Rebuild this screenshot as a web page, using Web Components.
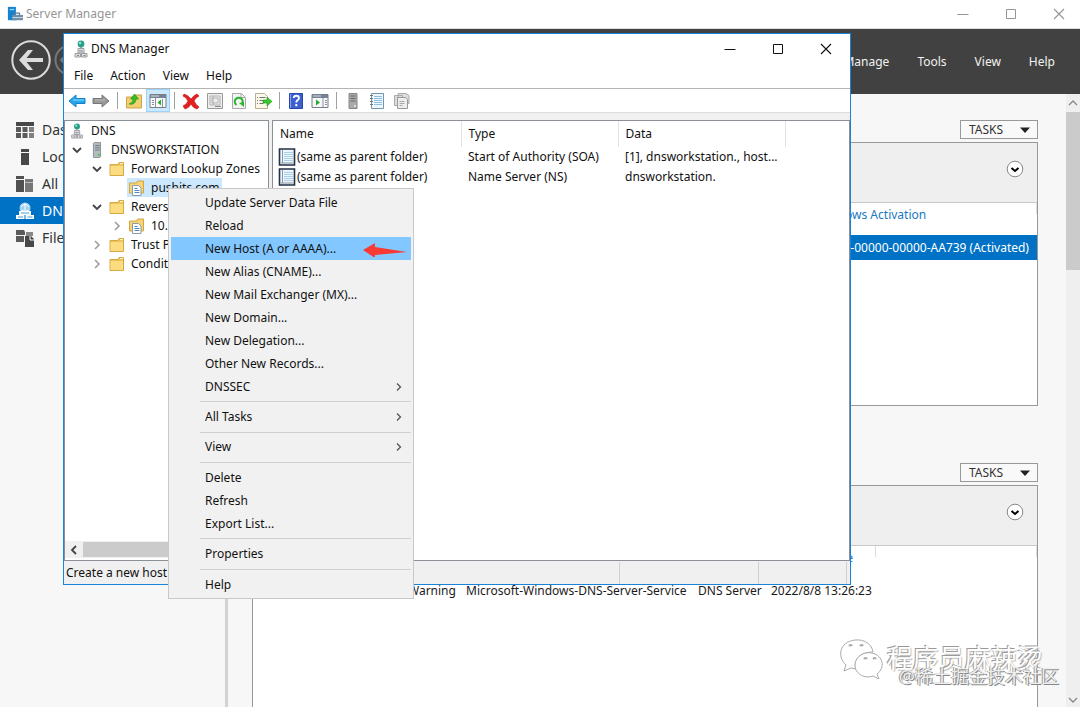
<!DOCTYPE html>
<html lang="en">
<head>
<meta charset="utf-8">
<title>Server Manager</title>
<style>
  html, body { margin: 0; height: 100%; overflow: hidden; }
  body { font: 12px/16px "Noto Sans", "Noto Sans CJK SC", sans-serif; color: #1a1a1a; background: #f7f7f7; }
</style>
</head>
<body>
<server-desktop></server-desktop>

<script>
const icons = {
  server: ['0 0 18 18', '<path d="M1 1h9v15H1z" fill="#1583cf"/><path d="M3 4h5" stroke="#8fd0f7" stroke-width="1.5"/><path d="M6 10h12v6H6z" fill="#6d8fa8"/><path d="M9 10V8h5v2" fill="none" stroke="#5d7f98" stroke-width="1.4"/><path d="M6 13h12" stroke="#d5e2ea"/>'],
  back: ['0 0 40 40', '<circle cx="20" cy="20" r="18.7" fill="none" stroke="#dcdcdc" stroke-width="2"/><path d="M32 20H11" fill="none" stroke="#dcdcdc" stroke-width="4"/><path d="M17 10h5l-8 10 8 10h-5L8 20z" fill="#dcdcdc"/>'],
  fwd: ['0 0 32 32', '<circle cx="16" cy="16" r="14.5" fill="none" stroke="#777" stroke-width="2"/><path d="M25 16H8" fill="none" stroke="#777" stroke-width="3"/><path d="M14 9 7 16l7 7" fill="none" stroke="#777" stroke-width="2"/>'],
  min: ['0 0 12 12', '<path d="M.5 6.5h11" stroke="currentColor"/>'],
  max: ['0 0 12 12', '<path d="M1.5 1.5h9v9h-9z" fill="none" stroke="currentColor"/>'],
  close: ['0 0 12 12', '<path d="m1 1 10 10M11 1 1 11" stroke="currentColor" stroke-width="1.1"/>'],
  dash: ['0 0 18 16', '<path d="M0 0h18v4H0z" fill="#484848"/><path d="M0 5h5v5H0zM0 11h5v5H0zM6.500 5h5v5h-5zM6.500 11h5v5h-5z" fill="#5a5a5a"/><path d="M13 5h5v5h-5zM13 11h5v5h-5z" fill="#808080"/>'],
  local: ['0 0 18 16', '<path d="M5 0h8v3H5zM5 4h8v12H5z" fill="#484848"/>'],
  all: ['0 0 18 16', '<path d="M0 0h8v16H0z" fill="#505050"/><path d="M0 3.500h8" stroke="#f7f7f7"/><path d="M9 3h8v13H9z" fill="#777"/><path d="M9 6.500h8" stroke="#d5d5d5" stroke-width=".7"/>'],
  dnsnav: ['0 0 18 18', '<circle cx="9" cy="6" r="5.500" fill="#9fd1f2"/><path d="M5 5q4-5 8 0M5 8q4 3 8 0M9 1v10" stroke="#fff" fill="none"/><path d="M3 9h12v4H3zM0 13h8.500v4H0zM9.500 13H18v4H9.500z" fill="#fff"/><path d="M5 11h8M2 15h5M11.500 15h5" stroke="#4b9fd8"/>'],
  file: ['0 0 18 18', '<path d="M0 1h8l1 2v3H0zM0 7h8v6H0z" fill="#5a5a5a"/><path d="M10 3h7v4h-7z" fill="#888"/><path d="M9 7h6l3 3v8H9z" fill="#484848"/><path d="M14 7v4h4" stroke="#f7f7f7" fill="none"/>'],
  dns: ['0 0 14 18', '<circle cx="7" cy="4" r="3.400" fill="#2d9f88"/><circle cx="6" cy="3" r="1.300" fill="#8be5cd"/><path d="M7 7v3" stroke="#777"/><path d="M4 8.500h6V13H4zM1 13.500h5.500v3.500H1zM7.500 13.500H13v3.500H7.500z" fill="#ddd" stroke="#9a9ea2"/><path d="M5 11h4M3 15.500h2M9.500 15.500h2" stroke="#888"/>'],
  host: ['0 0 12 18', '<path d="M2 1.500 3 .5h7v16l-1 1H2z" fill="#b5bcc1" stroke="#848c91"/><path d="M4 4h5M4 6.500h5M4 9h5" stroke="#697177"/><circle cx="8" cy="14.500" r="1.300" fill="#51c65b"/>'],
  hostgray: ['0 0 12 18', '<path d="M2 1.500h8v15H2z" fill="#aaa" stroke="#888"/><path d="M3.500 4h5M3.500 6.500h5M3.500 9h5" stroke="#666"/><circle cx="8" cy="14" r="1" fill="#eee"/>'],
  folder: ['0 0 16 16', '<path d="M1 3.500h8l1-2h4.500v13H1z" fill="#e9c35b" stroke="#d6a842"/><path d="M1.500 5H14v9H1.500z" fill="#fbdc81"/><path d="M11 2.500h3" stroke="#fff5c8"/>'],
  zone: ['0 0 16 16', '<path d="M.5 3h7l1-2h6v12H.5z" fill="#f6d376" stroke="#d3a644"/><path d="M3.500 5.500h6l2.500 2.500v7.500H3.500z" fill="#fff" stroke="#8d9ba5"/><path d="M5.500 8.500h3M5.500 10.500h5M5.500 12.500h5" stroke="#4e88bd"/>'],
  down: ['0 0 12 12', '<path d="m2 4 4 4 4-4" fill="none" stroke="#444" stroke-width="1.8"/>'],
  right: ['0 0 12 12', '<path d="m4 2 4 4-4 4" fill="none" stroke="#999" stroke-width="1.500"/>'],
  sub: ['0 0 12 12', '<path d="m4 2.500 3.500 3.500-3.500 3.500" fill="none" stroke="#555" stroke-width="1.300"/>'],
  left: ['0 0 12 12', '<path d="M8 2 4 6l4 4" fill="none" stroke="#444" stroke-width="1.800"/>'],
  up: ['0 0 12 12', '<path d="m2 8 4-4 4 4" fill="none" stroke="#888" stroke-width="1.300"/>'],
  downgray: ['0 0 12 12', '<path d="m2 4 4 4 4-4" fill="none" stroke="#888" stroke-width="1.300"/>'],
  tleft: ['0 0 18 18', '<path d="m1 9 7-6v3.500h9v5H8V15z" fill="#25a6ea" stroke="#1780c7"/><path d="M5 8h11" stroke="#8edbff"/>'],
  tright: ['0 0 18 18', '<path d="m17 9-7-6v3.500H1v5h9V15z" fill="#999" stroke="#777"/><path d="M3 8h10" stroke="#bbb"/>'],
  upfolder: ['0 0 18 18', '<path d="M1.500 5h7l1-2h7v13h-15z" fill="#f2cf70" stroke="#cda348"/><path d="M4 12c3-1 4-3 4-5H5.500L9.500 2l4 5H11c0 4-3 6-7 5z" fill="#35bd24" stroke="#259015" stroke-width=".6"/>'],
  tree: ['0 0 18 18', '<path d="M1 2.500h16v13H1z" fill="#f8f8f8" stroke="#777e89"/><path d="M1 3h16v3H1z" fill="#778395"/><path d="M2 4h8" stroke="#d5dbe4"/><path d="M6.500 6v9M3 8.500h2M3 10.500h2M3 12.500h2M13.500 7v8" stroke="#8793a2"/><path d="M12 7.500v6L8.500 10.500z" fill="#23ad2d"/>'],
  run: ['0 0 18 18', '<path d="M1 2.500h16v13H1z" fill="#f8f8f8" stroke="#777e89"/><path d="M1 3h16v3H1z" fill="#778395"/><path d="M2 4h8" stroke="#d5dbe4"/><path d="M12 6v9M14 8.500h2M14 10.500h2M14 12.500h2" stroke="#8793a2"/><path d="M5 7.500v6l4-3z" fill="#23ad2d"/>'],
  x: ['0 0 18 18', '<path d="M2 2q4 1 7 5 3-4 6-5l2 2q-4 2-5 5 2 4 5 6l-2 2q-4-1-6-5-2 4-6 5l-2-3q4-2 5-5-2-4-5-5z" fill="#e62020" stroke="#b81515" stroke-width=".6"/>'],
  props: ['0 0 18 18', '<path d="M1.500 1.500h15v15h-15z" fill="#eee" stroke="#999"/><path d="M4 4h10v9H4zM6 6h6v5H6zM7 4v9" fill="none" stroke="#b0b0b0"/><path d="M9 14.500h6" stroke="#888"/>'],
  refresh: ['0 0 18 18', '<path d="M2.500 1.500h9l4 4v11h-13z" fill="#f5f5f5" stroke="#aaa"/><path d="M11 1.500v4h4" fill="none" stroke="#aaa"/><path d="M6.500 13A4 4 0 1 1 12 12" fill="none" stroke="#28b52b" stroke-width="2"/><path d="m9 11 5-1v5z" fill="#28b52b"/>'],
  export: ['0 0 18 18', '<path d="M1.500 1.500h9l3 3v12h-12z" fill="#faf8e8" stroke="#b7b090"/><path d="M3 5.500h1M3 8.500h1M3 11.500h1M5.500 5.500h6M5.500 8.500h4M5.500 11.500h4" stroke="#777"/><path d="M9 8h4V5l5 4.500-5 4.500v-3H9z" fill="#3ac72d" stroke="#249719" stroke-width=".6"/>'],
  help: ['0 0 18 18', '<path d="M2.500 1.500h13v15h-13z" fill="#3d5fd0" stroke="#2546a4"/><path d="M3.500 2v14" stroke="#8da4ec"/><path d="M6.700 6q.3-2.300 2.700-2.300 2.500 0 2.500 2.300 0 1.400-1.400 2.200-1.200.8-1.200 2.300M9.300 12v2.300" fill="none" stroke="#fff" stroke-width="1.900"/>'],
  notebook: ['0 0 18 18', '<path d="M3.500 1.500h12v15h-12z" fill="#edf7fd" stroke="#7795aa"/><path d="M6 4.500h8M6 6.500h8M6 8.500h8M6 10.500h8M6 12.500h8" stroke="#8cbfe0"/><path d="M2 3.500h3M2 6.500h3M2 9.500h3M2 12.500h3" stroke="#777"/>'],
  record: ['0 0 18 18', '<path d="M1.500 1h15v16h-15z" fill="#edf6fc" stroke="#233047" stroke-width="1.600"/><path d="M6 4.500h9M6 6.500h9M6 8.500h9M6 10.500h9M6 12.500h9" stroke="#a9d0e8"/><path d="M4.500 2v13" stroke="#8797a8"/><path d="M3 15h12" stroke="#8a94a0"/>'],
  copy: ['0 0 18 18', '<path d="M2.500 3.500h8v10h-8zM6 1.500h8l3 2v8H6z" fill="#ddd" stroke="#aaa"/><path d="M5.500 5.500h8l2 2v9h-10z" fill="#eee" stroke="#999"/><path d="M7.500 9.500h5M7.500 11.500h5M7.500 13.500h3" stroke="#aaa"/>'],
  tri: ['0 0 12 12', '<path d="M1 3.500h10L6 9z" fill="#222"/>'],
  expand: ['0 0 18 18', '<circle cx="9" cy="9" r="7.800" fill="#fff" stroke="#888"/><path d="m5.500 8 3.500 3 3.500-3" fill="none" stroke="#000" stroke-width="2"/>'],
  arrow: ['0 0 44 16', '<path d="M0 9 12 2v4l32 5-32 3v3z" fill="#f83a35"/>'],
  wechat: ['0 0 44 42', '<g fill="#fff" fill-opacity=".8" stroke="#aaa"><path d="M7 28C-2 20 0 5 16 3c9-1 17 4 18 12-13 0-20 8-17 17l-5-1-7 3z"/><path d="M38 37c8-6 7-18-5-21-12-2-20 8-16 17 4 7 11 8 17 6l6 3z"/><path d="M10 9q2-2 3 0M21 9q2-2 3 0M25 22q2-2 3 0M34 22q2-2 3 0" stroke-width="2"/></g>'],
};

/* Base class: an open shadow root with the subclass's styles and markup. */
class View extends HTMLElement {
  constructor() { super(); this.attachShadow({ mode: 'open' }); }
  connectedCallback() {
    const t = document.createElement('template');
    t.innerHTML = `<style>*{box-sizing:border-box}button{font:inherit;color:inherit;border:0;padding:0;margin:0;background:none}${this.css()}</style>${this.html()}`;
    this.shadowRoot.replaceChildren(t.content.cloneNode(true));
  }
  css() { return ''; }
  html() { return '<slot></slot>'; }
}

class UiIcon extends View {
  css() {
    return `:host{display:inline-flex;flex:none}svg{display:block;width:${this.getAttribute('w') || 16}px;height:${this.getAttribute('h') || this.getAttribute('w') || 16}px}`;
  }
  html() {
    const [box, body] = icons[this.getAttribute('name')];
    return `<svg viewBox="${box}" preserveAspectRatio="xMidYMid meet" aria-hidden="true">${body}</svg>`;
  }
}

class TitleBar extends View {
  css() {
    return `:host{display:flex;align-items:center;background:#fff}
      .title{flex:1;display:flex;align-items:center;gap:3px;font-size:12px}
      button{width:48px;height:28px;display:flex;align-items:center;justify-content:center}`;
  }
  html() {
    return `<div class="title"><slot name="icon"></slot><slot></slot></div>
      <button aria-label="Minimize"><ui-icon name="min" w="12"></ui-icon></button>
      <button aria-label="Maximize"><ui-icon name="max" w="12"></ui-icon></button>
      <button aria-label="Close"><ui-icon name="close" w="12"></ui-icon></button>`;
  }
}

class AppHeader extends View {
  css() {
    return `:host{display:flex;align-items:center;height:65px;box-sizing:border-box;background:#414141;color:#f2f2f2;padding:1px 25px 0 11px}
      .nav{display:flex;align-items:center;gap:3px;flex:1}
      .menu{display:flex;gap:28px}`;
  }
  html() {
    return `<div class="nav"><button aria-label="Back"><ui-icon name="back" w="40"></ui-icon></button>
      <button aria-label="Forward"><ui-icon name="fwd" w="32"></ui-icon></button></div>
      <div class="menu"><button>Manage</button><button>Tools</button><button>View</button><button>Help</button></div>`;
  }
}

class NavItem extends View {
  css() {
    return `:host{display:block}
      a{display:flex;align-items:center;gap:8px;height:27px;padding-left:16px;font-size:14px;line-height:20px;color:#333;text-decoration:none;white-space:nowrap}
      :host([selected]) a{background:#0072c6;color:#fff}`;
  }
  html() { return `<a href="#"><ui-icon name="${this.getAttribute('icon')}" w="18"></ui-icon><slot></slot></a>`; }
}

class SideNav extends View {
  css() { return `:host{display:block;box-sizing:border-box;width:228px;flex:none;padding-top:22px;border-right:3px solid #d2d2d2;background:#f7f7f7}`; }
  html() {
    return `<nav><nav-item icon="dash">Das</nav-item><nav-item icon="local">Loc</nav-item>
      <nav-item icon="all">All</nav-item><nav-item icon="dnsnav" selected>DN</nav-item>
      <nav-item icon="file">File</nav-item></nav>`;
  }
}

/* A dashboard tile: TASKS button above a bordered panel with a filter band. */
class TilePanel extends View {
  css() {
    return `:host{display:flex;flex-direction:column;align-items:stretch}
      .tasks{align-self:flex-end;display:flex;align-items:center;justify-content:space-between;width:78px;height:19px;padding:0 6px 0 8px;border:1px solid #999;background:#f9f9f9;color:#333;margin-bottom:3px}
      .panel{flex:1;border:1px solid #999;background:#fff}
      .band{display:flex;align-items:center;justify-content:flex-end;height:60px;padding:0 13px 4px 0;background:#efefef;border-bottom:1px solid #c8c8c8}`;
  }
  html() {
    return `<button class="tasks">TASKS<ui-icon name="tri" w="12"></ui-icon></button>
      <div class="panel"><div class="band"><button aria-label="Expand filters"><ui-icon name="expand" w="18"></ui-icon></button></div><slot></slot></div>`;
  }
}

const gridCss = `:host{display:block}
  table{width:100%;table-layout:fixed;border-collapse:collapse}
  th,td{text-align:left;font-weight:400;line-height:24px;padding:0 5px;white-space:nowrap}
  th{color:#1a79bf;padding-bottom:8px;background:linear-gradient(#ddd,#ddd) right top/1px 11px no-repeat}
  td{line-height:25px}`;

class ServerGrid extends View {
  css() { return gridCss + `.act{width:226px}tbody tr{background:#0072c6;color:#fff}`; }
  html() {
    return `<table><thead><tr><th></th><th class="act">Windows Activation</th></tr></thead>
      <tbody><tr><td></td><td>00430-00000-00000-AA739 (Activated)</td></tr></tbody></table>`;
  }
}

class EventGrid extends View {
  css() { return gridCss + `.a{width:150px}.c{width:58px}.d{width:232px}.e{width:73px}.f{width:110px}`; }
  html() {
    return `<table><thead><tr><th class="a"></th><th class="c"></th><th class="d"></th><th class="e"></th><th class="f">Date and Time</th><th></th></tr></thead>
      <tbody><tr><td></td><td>Warning</td><td>Microsoft-Windows-DNS-Server-Service</td><td>DNS Server</td><td>2022/8/8 13:26:23</td><td></td></tr></tbody></table>`;
  }
}

class PageScroll extends View {
  css() {
    return `:host{display:flex;flex-direction:column;align-items:center;width:14px;flex:none;background:#efefef;padding:3px 0 1px;box-sizing:border-box}
      .track{flex:1;width:100%}.thumb{height:27%;background:#cbcbcb;margin-top:3px}`;
  }
  html() {
    return `<ui-icon name="up" w="12"></ui-icon><div class="track"><div class="thumb"></div></div><ui-icon name="downgray" w="12"></ui-icon>`;
  }
}

class ServerManager extends View {
  css() {
    return `:host{display:flex;flex-direction:column;height:100%}
      title-bar{height:29px;padding-left:7px;margin-right:-3px;color:#959595;border-bottom:1px solid #ddd}
      .body{flex:1;display:flex;min-height:0}
      main{flex:1;min-width:0;display:flex;flex-direction:column;gap:57px;padding:26px 28px 0 24px;overflow:hidden}
      .props{height:286px;flex:none}
      .events{flex:none;height:400px}`;
  }
  html() {
    return `<title-bar><ui-icon slot="icon" name="server" w="16"></ui-icon>Server Manager</title-bar>
      <app-header></app-header>
      <div class="body"><side-nav></side-nav>
      <main><tile-panel class="props"><server-grid></server-grid></tile-panel>
      <tile-panel class="events"><event-grid></event-grid></tile-panel></main>
      <page-scroll></page-scroll></div>`;
  }
}

class ToolBar extends View {
  css() {
    return `:host{display:flex;align-items:stretch;height:25px;box-sizing:border-box;padding-left:1px;border-top:1px solid #b4b4b4;border-bottom:1px solid #dcdcdc;background:#fff}
      button{width:24px;display:flex;align-items:center;justify-content:center}
      button.on{background:#cce8ff;box-shadow:inset 0 0 0 1px #99d1ff}
      i{width:1px;margin:3px 4px;background:#a0a0a0}`;
  }
  html() {
    const b = (n, l, c = '') => `<button class="${c}" aria-label="${l}"><ui-icon name="${n}" w="18"></ui-icon></button>`;
    return b('tleft', 'Back') + b('tright', 'Forward') + '<i></i>' + b('upfolder', 'Up') + b('tree', 'Show tree', 'on') + '<i></i>' +
      b('x', 'Delete') + b('props', 'Properties') + b('refresh', 'Refresh') + b('export', 'Export') + '<i></i>' +
      b('help', 'Help') + b('run', 'Action pane') + '<i></i>' + b('hostgray', 'New server') + b('notebook', 'New record') + b('copy', 'Copy');
  }
}

class TreeRow extends View {
  css() {
    const level = Number(this.getAttribute('level'));
    return `:host{display:flex;align-items:center;height:19px;padding-left:${2 + Math.max(0, level - 1) * 20}px;white-space:nowrap}
      .slot{width:20px;display:flex;justify-content:center;flex:none}
      .label{display:flex;align-items:center;gap:4px;height:19px;padding-right:2px}
      :host([selected]) .label{background:#cce8ff}`;
  }
  html() {
    const open = this.getAttribute('open');
    const chev = this.getAttribute('level') === '0' ? '' : `<span class="slot">${open ? `<ui-icon name="${open}" w="12"></ui-icon>` : ''}</span>`;
    return `${chev}<span class="label"><span class="slot"><ui-icon name="${this.getAttribute('icon')}" w="16"></ui-icon></span><slot></slot></span>`;
  }
}

class ZoneTree extends View {
  css() {
    return `:host{display:flex;flex-direction:column;box-sizing:border-box;width:205px;flex:none;border:1px solid #8b8f96;background:#fff;overflow:hidden}
      .rows{flex:1}
      .bar{display:flex;align-items:center;height:17px;margin-bottom:2px;background:#f0f0f0}
      .bar button{width:18px;height:17px;display:flex;align-items:center;justify-content:center}
      .thumb{width:130px;height:15px;background:#cbcbcb}`;
  }
  html() {
    return `<div class="rows"><tree-row level="0" icon="dns">DNS</tree-row>
      <tree-row level="1" open="down" icon="host">DNSWORKSTATION</tree-row>
      <tree-row level="2" open="down" icon="folder">Forward Lookup Zones</tree-row>
      <tree-row level="3" icon="zone" selected>pushits.com</tree-row>
      <tree-row level="2" open="down" icon="folder">Reverse</tree-row>
      <tree-row level="3" open="right" icon="zone">10.1</tree-row>
      <tree-row level="2" open="right" icon="folder">Trust P</tree-row>
      <tree-row level="2" open="right" icon="folder">Condit</tree-row></div>
      <div class="bar"><button aria-label="Scroll left"><ui-icon name="left" w="12"></ui-icon></button><div class="thumb"></div></div>`;
  }
}

class RecordList extends View {
  css() {
    return `:host{display:block;box-sizing:border-box;flex:1;min-width:0;border:1px solid #8b8f96;background:#fff}
      table{width:100%;table-layout:fixed;border-collapse:collapse}
      th,td{text-align:left;font-weight:400;padding:0 7px;white-space:nowrap;height:20px}
      th{height:26px;border-right:1px solid #e2e2e2}
      th:last-child{border-right:0}
      td:first-child{padding-left:5px}
      .cell{display:flex;align-items:center;gap:1px}
      .n{width:188px}.t{width:157px}.d{width:167px}`;
  }
  html() {
    const row = (t, d) => `<tr><td><span class="cell"><ui-icon name="record" w="18"></ui-icon>(same as parent folder)</span></td><td>${t}</td><td>${d}</td><td></td></tr>`;
    return `<table><thead><tr><th class="n">Name</th><th class="t">Type</th><th class="d">Data</th><th></th></tr></thead>
      <tbody>${row('Start of Authority (SOA)', '[1], dnsworkstation., host...')}${row('Name Server (NS)', 'dnsworkstation.')}</tbody></table>`;
  }
}

class StatusBar extends View {
  css() {
    return `:host{display:flex;align-items:center;height:23px;background:#f0f0f0;padding:0 3px 0 2px}
      .msg{flex:1}span{height:22px;line-height:22px;border-right:1px solid #d0d0d0;white-space:nowrap}
      .b{width:139px}.c{width:88px}`;
  }
  html() { return `<span class="msg">Create a new host</span><span class="b"></span><span class="c"></span>`; }
}

class DnsWindow extends View {
  css() {
    return `:host{display:flex;flex-direction:column;border:1px solid #1883d7;background:#f0f0f0;color:#111}
      title-bar{height:30px;padding-left:10px;color:#111}
      .menu{display:flex;gap:17px;height:24px;padding-left:10px;background:#fff}
      .panes{flex:1;display:flex;gap:3px;margin-top:7px;min-height:0}`;
  }
  html() {
    return `<title-bar><ui-icon slot="icon" name="dns" w="14" h="18"></ui-icon>DNS Manager</title-bar>
      <div class="menu"><button>File</button><button>Action</button><button>View</button><button>Help</button></div>
      <tool-bar></tool-bar><div class="panes"><zone-tree></zone-tree><record-list></record-list></div><status-bar></status-bar>`;
  }
}

class MenuItem extends View {
  css() {
    return `:host{display:block}
      button{display:flex;align-items:center;justify-content:space-between;width:100%;height:23px;padding:0 6px 0 34px;text-align:left;color:#111}
      :host([hot]) button{background:#82c7ff;padding-right:4px}`;
  }
  html() {
    const end = this.hasAttribute('hot') ? '<ui-icon name="arrow" w="44" h="16"></ui-icon>' : this.hasAttribute('sub') ? '<ui-icon name="sub" w="12"></ui-icon>' : '';
    return `<button role="menuitem"><slot></slot>${end}</button>`;
  }
}

class MenuLine extends View {
  css() { return `:host{flex:1;display:flex;align-items:center;padding-left:29px}hr{width:100%;margin:0;border:0;height:1px;background:#d0d0d0}`; }
  html() { return '<hr>'; }
}

class ContextMenu extends View {
  css() { return `:host{display:flex;flex-direction:column;box-sizing:border-box;padding:2px;border:1px solid #c8c8c8;background:#f1f1f1}`; }
}

class PageMark extends View {
  css() {
    return `:host{display:block;pointer-events:none;white-space:nowrap}
      .a{display:flex;align-items:center;gap:4px;font-size:26px;line-height:40px;color:#fff;text-shadow:-1px -1px 0 #9a9a9a,1px 1px 1px #bbb}
      .b{text-align:right;margin-top:-13px;padding-left:60px;font-size:18px;line-height:20px;color:#eee;text-shadow:1px 1px 0 #888,-1px 0 0 #999}`;
  }
  html() { return `<div class="a"><ui-icon name="wechat" w="44" h="42"></ui-icon><span>程序员麻辣烫</span></div><div class="b">@稀土掘金技术社区</div>`; }
}

class ServerDesktop extends View {
  css() {
    return `:host{display:block;position:relative;height:100vh;overflow:hidden}
      dns-window{position:absolute;left:63px;right:229px;top:33px;bottom:122px}
      context-menu{position:absolute;left:168px;top:188px;width:246px;height:411px}
      page-mark{position:absolute;right:21px;bottom:21px}`;
  }
  html() {
    return `<server-manager></server-manager><dns-window></dns-window>
      <context-menu role="menu">
        <menu-item>Update Server Data File</menu-item><menu-item>Reload</menu-item><menu-item hot>New Host (A or AAAA)...</menu-item>
        <menu-item>New Alias (CNAME)...</menu-item><menu-item>New Mail Exchanger (MX)...</menu-item><menu-item>New Domain...</menu-item>
        <menu-item>New Delegation...</menu-item><menu-item>Other New Records...</menu-item><menu-item sub>DNSSEC</menu-item>
        <menu-line></menu-line><menu-item sub>All Tasks</menu-item><menu-line></menu-line><menu-item sub>View</menu-item><menu-line></menu-line>
        <menu-item>Delete</menu-item><menu-item>Refresh</menu-item><menu-item>Export List...</menu-item><menu-line></menu-line>
        <menu-item>Properties</menu-item><menu-line></menu-line><menu-item>Help</menu-item>
      </context-menu><page-mark></page-mark>`;
  }
}

Object.entries({
  'ui-icon': UiIcon, 'title-bar': TitleBar, 'app-header': AppHeader, 'nav-item': NavItem, 'side-nav': SideNav,
  'tile-panel': TilePanel, 'server-grid': ServerGrid, 'event-grid': EventGrid, 'page-scroll': PageScroll,
  'server-manager': ServerManager, 'tool-bar': ToolBar, 'tree-row': TreeRow, 'zone-tree': ZoneTree,
  'record-list': RecordList, 'status-bar': StatusBar, 'dns-window': DnsWindow, 'menu-item': MenuItem,
  'menu-line': MenuLine, 'context-menu': ContextMenu, 'page-mark': PageMark, 'server-desktop': ServerDesktop,
}).forEach(([name, cls]) => customElements.define(name, cls));
</script>
</body>
</html>
